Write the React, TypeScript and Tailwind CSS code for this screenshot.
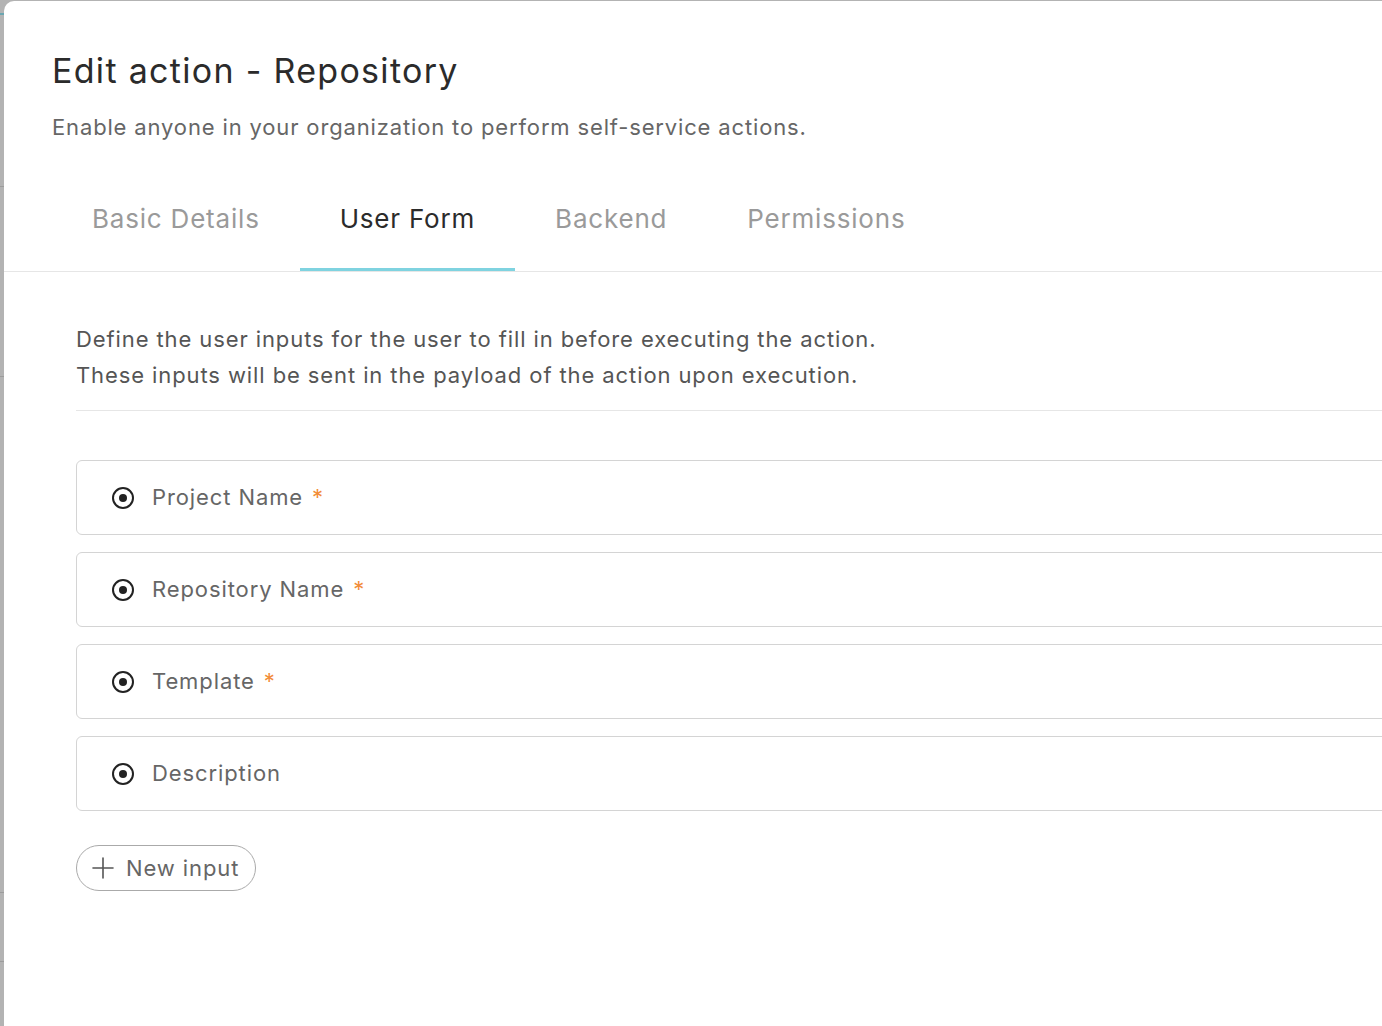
import React from 'react';

const tabs = ['Basic Details', 'User Form', 'Backend', 'Permissions'];

const inputs = [
  { label: 'Project Name', required: true },
  { label: 'Repository Name', required: true },
  { label: 'Template', required: true },
  { label: 'Description', required: false },
];

const RadioIcon = () => (
  <svg width="24" height="24" viewBox="0 0 24 24" fill="none">
    <circle cx="12" cy="12" r="10" stroke="#222" strokeWidth="2" />
    <circle cx="12" cy="12" r="4" fill="#222" />
  </svg>
);

const PlusIcon = () => (
  <svg width="24" height="24" viewBox="0 0 24 24" fill="none">
    <path d="M12 2v20M2 12h20" stroke="#555" strokeWidth="1.6" strokeLinecap="round" />
  </svg>
);

export default function App() {
  return (
    <div
      className="w-[1382px] h-[1026px] bg-[#b3b3b3] overflow-hidden flex"
      style={{ fontFamily: 'Inter, "Noto Sans", sans-serif' }}
    >
      {/* backdrop sliver of the page behind the modal */}
      <div className="w-[4px] shrink-0 flex flex-col">
        <div className="h-[13px]" />
        <div className="h-[2px] bg-[#6aa6b1]" />
        <div className="h-[171px]" />
        <div className="h-px bg-[#9c9c9c]" />
        <div className="h-[189px]" />
        <div className="h-px bg-[#9c9c9c]" />
        <div className="h-[515px]" />
        <div className="h-px bg-[#9c9c9c]" />
        <div className="h-[68px]" />
        <div className="h-px bg-[#9c9c9c]" />
      </div>

      <div className="mt-px w-[1600px] shrink-0 bg-white rounded-tl-[10px]">
        <div className="px-[48px] pt-[50px]">
          <h1 className="text-[34px] leading-[40px] text-[#2b2b2b] font-normal tracking-[1.3px]">Edit action - Repository</h1>
          <p className="mt-[21px] text-[22px] leading-[30px] text-[#666] tracking-[0.85px]">
            Enable anyone in your organization to perform self-service actions.
          </p>
        </div>

        <div className="mt-[39px] border-b border-[#e6e6e6] px-[48px] flex">
          {tabs.map((t) => (
            <button
              key={t}
              className={`px-[40px] pt-[20px] pb-[31px] text-[26px] leading-[36px] tracking-[0.8px] border-b-[3px] ${
                t === 'User Form' ? 'text-[#2b2b2b] border-[#7fd3e0]' : 'text-[#9a9a9a] border-transparent'
              }`}
            >
              {t}
            </button>
          ))}
        </div>

        <div className="pl-[72px] pt-[49px]">
          <div className="pb-[17px] border-b border-[#e6e6e6] text-[22px] leading-[36px] text-[#555] tracking-[0.9px]">
            <p>Define the user inputs for the user to fill in before executing the action.</p>
            <p>These inputs will be sent in the payload of the action upon execution.</p>
          </div>

          <div className="mt-[49px] flex flex-col gap-[17px]">
            {inputs.map((i) => (
              <div
                key={i.label}
                className="h-[75px] border border-[#d4d4d4] rounded-[6px] flex items-center pl-[34px] gap-[17px]"
              >
                <RadioIcon />
                <span className="text-[22px] text-[#666] tracking-[0.9px]">
                  {i.label}
                  {i.required && <span className="text-[#f28c38] ml-[9px]">*</span>}
                </span>
              </div>
            ))}
          </div>

          <button className="mt-[34px] h-[46px] border border-[#aaa] rounded-full flex items-center pl-[14px] pr-[16px] gap-[11px] text-[22px] text-[#666] tracking-[0.9px]">
            <PlusIcon />
            New input
          </button>
        </div>
      </div>
    </div>
  );
}
